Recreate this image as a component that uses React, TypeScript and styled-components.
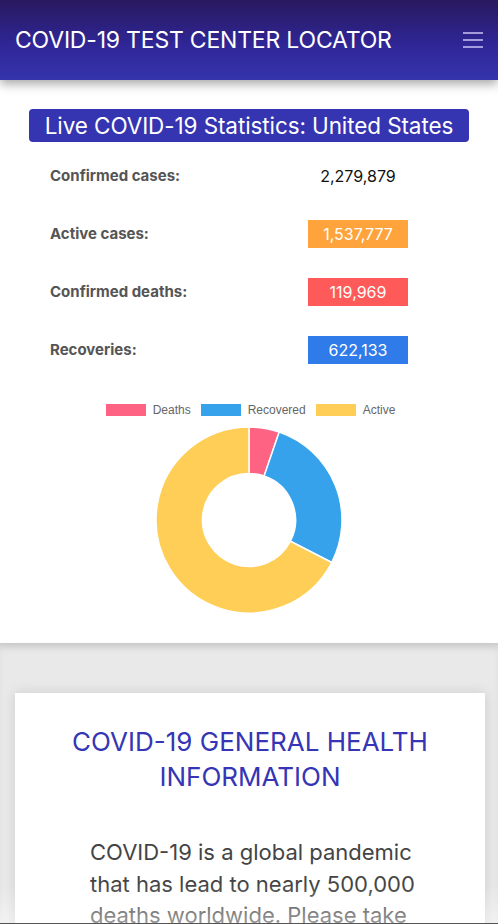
import React from "react";
import styled, { createGlobalStyle } from "styled-components";

const Global = createGlobalStyle`
  html, body { margin: 0; padding: 0; background: #ffffff; }
  body { font-family: Inter, "Noto Sans", sans-serif; -webkit-font-smoothing: antialiased; }
  * { box-sizing: border-box; }
`;

const Page = styled.div`
  width: 498px;
  min-height: 924px;
  background: #e9e9e9;
  overflow: hidden;
`;

const Header = styled.header`
  position: relative;
  z-index: 2;
  height: 80px;
  display: flex;
  align-items: center;
  justify-content: space-between;
  padding: 0 13px 0 15px;
  background: linear-gradient(180deg, #28195f 0%, #30279a 60%, #3534aa 100%);
  box-shadow: 0 4px 10px rgba(0, 0, 0, 0.35);
`;

const Title = styled.h1`
  margin: 0;
  color: #ffffff;
  font-size: 23px;
  font-weight: 400;
  letter-spacing: -0.2px;
  line-height: 1;
`;

const Burger = styled.button`
  width: 24px;
  height: 20px;
  padding: 2px 2px;
  border: none;
  background: transparent;
  display: flex;
  flex-direction: column;
  justify-content: space-between;
`;

const BurgerLine = styled.span`
  display: block;
  height: 2px;
  width: 20px;
  background: rgba(214, 206, 255, 0.7);
`;

const StatsSection = styled.section`
  position: relative;
  z-index: 1;
  background: #ffffff;
  padding: 29px 0 28px;
  display: flex;
  flex-direction: column;
  align-items: center;
  box-shadow: 0 3px 8px rgba(0, 0, 0, 0.08);
`;

const Badge = styled.h2`
  margin: 0;
  width: 440px;
  height: 33px;
  display: flex;
  align-items: center;
  justify-content: center;
  background: #3534b1;
  border-radius: 4px;
  color: #ffffff;
  font-size: 22.5px;
  font-weight: 400;
  letter-spacing: -0.1px;
`;

const StatGrid = styled.div`
  width: 100%;
  margin-top: 20px;
  padding: 0 90px 0 50px;
  display: grid;
  grid-template-columns: 1fr 100px;
  grid-auto-rows: 28px;
  row-gap: 30px;
  align-items: center;
`;

const Label = styled.div`
  color: #555555;
  font-size: 15px;
  font-weight: 700;
  margin-top: -2px;
`;

const Value = styled.div<{ $bg?: string }>`
  height: 28px;
  display: flex;
  align-items: center;
  justify-content: center;
  background: ${(p) => p.$bg || "transparent"};
  color: ${(p) => (p.$bg ? "#ffffff" : "#111111")};
  font-size: 16px;
  font-weight: 400;
`;

const Legend = styled.div`
  margin-top: 40px;
  padding-left: 3px;
  display: flex;
  gap: 10px;
  justify-content: center;
  font-family: "Liberation Sans", Arial, sans-serif;
  font-size: 12px;
  color: #666666;
`;

const LegendItem = styled.div`
  display: flex;
  align-items: center;
  gap: 7px;
  height: 12px;
`;

const Swatch = styled.span<{ $c: string }>`
  width: 40px;
  height: 12px;
  background: ${(p) => p.$c};
`;

const ChartBox = styled.svg`
  margin-top: 9px;
  display: block;
`;

const InfoSection = styled.section`
  padding: 50px 13px 0 15px;
  box-shadow: inset 0 6px 10px -4px rgba(0, 0, 0, 0.12);
`;

const Card = styled.div`
  background: #ffffff;
  padding: 31px 0 40px;
  box-shadow: 0 0 12px rgba(0, 0, 0, 0.12);
`;

const CardTitle = styled.h3`
  margin: 0 auto;
  width: 380px;
  text-align: center;
  color: #3535b5;
  font-size: 26px;
  font-weight: 400;
  line-height: 35px;
`;

const Para = styled.p`
  margin: 43px 0 0 75px;
  width: 335px;
  color: #444444;
  font-size: 22px;
  line-height: 31.5px;
`;

const BottomFade = styled.div`
  position: fixed;
  left: 0;
  right: 0;
  bottom: 0;
  height: 40px;
  background: linear-gradient(180deg, rgba(255, 255, 255, 0) 0%, rgba(255, 255, 255, 0.45) 100%);
  border-bottom: 1px solid #555555;
  pointer-events: none;
  z-index: 5;
`;

const stats = [
  { label: "Confirmed cases:", value: "2,279,879" },
  { label: "Active cases:", value: "1,537,777", bg: "#ffa43c" },
  { label: "Confirmed deaths:", value: "119,969", bg: "#ff5a5a" },
  { label: "Recoveries:", value: "622,133", bg: "#2f7be9" },
];

const slices = [
  { name: "Deaths", value: 119969, color: "#ff6384" },
  { name: "Recovered", value: 622133, color: "#36a2eb" },
  { name: "Active", value: 1537777, color: "#ffce56" },
];

function Donut() {
  const size = 190;
  const cx = size / 2;
  const cy = size / 2;
  const R = 93;
  const r = 46.5;
  const total = slices.reduce((s, x) => s + x.value, 0);
  let a = -Math.PI / 2;
  const paths = slices.map((s) => {
    const a0 = a;
    const a1 = a + (s.value / total) * Math.PI * 2;
    a = a1;
    const large = a1 - a0 > Math.PI ? 1 : 0;
    const p = (rad: number, ang: number) =>
      `${(cx + rad * Math.cos(ang)).toFixed(3)} ${(cy + rad * Math.sin(ang)).toFixed(3)}`;
    const d = `M ${p(R, a0)} A ${R} ${R} 0 ${large} 1 ${p(R, a1)} L ${p(r, a1)} A ${r} ${r} 0 ${large} 0 ${p(r, a0)} Z`;
    return <path key={s.name} d={d} fill={s.color} stroke="#ffffff" strokeWidth={1.5} strokeLinejoin="bevel" />;
  });
  return (
    <ChartBox width={size} height={size} viewBox={`0 0 ${size} ${size}`}>
      {paths}
    </ChartBox>
  );
}

export default function App() {
  return (
    <Page>
      <Global />
      <Header>
        <Title>COVID-19 TEST CENTER LOCATOR</Title>
        <Burger aria-label="menu">
          <BurgerLine />
          <BurgerLine />
          <BurgerLine />
        </Burger>
      </Header>
      <StatsSection>
        <Badge>Live COVID-19 Statistics: United States</Badge>
        <StatGrid>
          {stats.map((s) => (
            <React.Fragment key={s.label}>
              <Label>{s.label}</Label>
              <Value $bg={s.bg}>{s.value}</Value>
            </React.Fragment>
          ))}
        </StatGrid>
        <Legend>
          {slices.map((s) => (
            <LegendItem key={s.name}>
              <Swatch $c={s.color} />
              {s.name}
            </LegendItem>
          ))}
        </Legend>
        <Donut />
      </StatsSection>
      <InfoSection>
        <Card>
          <CardTitle>COVID-19 GENERAL HEALTH INFORMATION</CardTitle>
          <Para>
            COVID-19 is a global pandemic that has lead to nearly 500,000 deaths worldwide. Please take
            precautions to protect yourself and others.
          </Para>
        </Card>
      </InfoSection>
      <BottomFade />
    </Page>
  );
}
